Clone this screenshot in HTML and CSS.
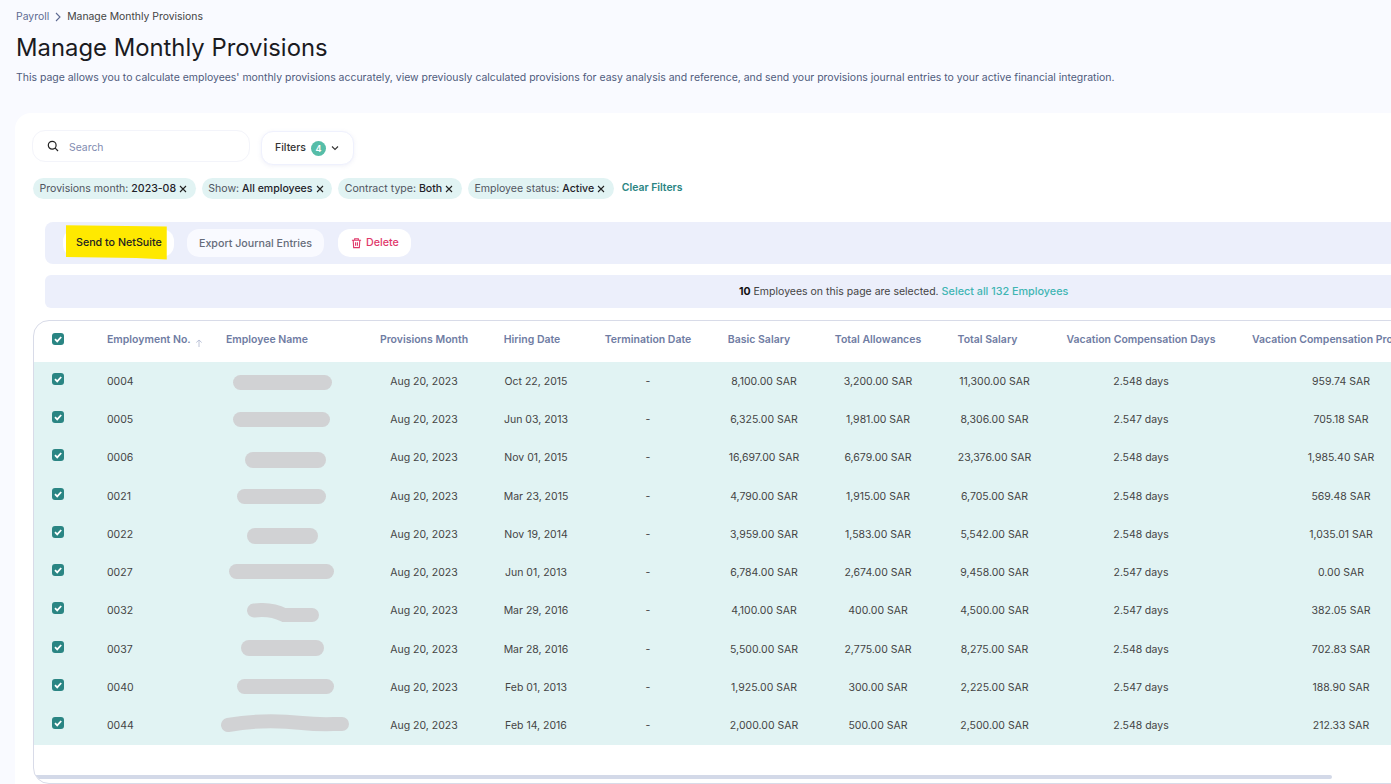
FILE: index.html
```html
<!DOCTYPE html>
<html lang="en">
<head>
<meta charset="utf-8">
<title>Manage Monthly Provisions</title>
<link rel="stylesheet" href="styles.css">
</head>
<body>
<main class="page">
  <nav class="crumbs">
    <a class="crumb-link">Payroll</a>
    <svg class="crumb-sep" viewBox="0 0 8 10" width="8" height="10"><path d="M2 1l4 4-4 4" fill="none" stroke="#5e6a92" stroke-width="1.1"/></svg>
    <span class="crumb-current">Manage Monthly Provisions</span>
  </nav>
  <h1 class="title">Manage Monthly Provisions</h1>
  <p class="intro">This page allows you to calculate employees' monthly provisions accurately, view previously calculated provisions for easy analysis and reference, and send your provisions journal entries to your active financial integration.</p>

  <section class="card">
    <div class="toolbar">
      <label class="search">
        <svg viewBox="0 0 12 12" width="12" height="12"><circle cx="5.2" cy="5.2" r="3.9" fill="none" stroke="#222" stroke-width="1.2"/><path d="M8.2 8.2l2.8 2.8" stroke="#222" stroke-width="1.2"/></svg>
        <span class="search-text">Search</span>
      </label>
      <button class="filters"><span class="filters-label">Filters</span> <span class="count">4</span>
        <svg viewBox="0 0 8 6" width="8" height="6"><path d="M1 1.5l3 3 3-3" fill="none" stroke="#333" stroke-width="1.1"/></svg>
      </button>
    </div>

    <div class="chips">
      <span class="chip">Provisions month: <b>2023-08</b><svg class="x" viewBox="0 0 8 8" width="8" height="8"><path d="M1 1l6 6M7 1l-6 6" stroke="#222" stroke-width="1.1"/></svg></span>
      <span class="chip">Show: <b>All employees</b><svg class="x" viewBox="0 0 8 8" width="8" height="8"><path d="M1 1l6 6M7 1l-6 6" stroke="#222" stroke-width="1.1"/></svg></span>
      <span class="chip">Contract type: <b>Both</b><svg class="x" viewBox="0 0 8 8" width="8" height="8"><path d="M1 1l6 6M7 1l-6 6" stroke="#222" stroke-width="1.1"/></svg></span>
      <span class="chip">Employee status: <b>Active</b><svg class="x" viewBox="0 0 8 8" width="8" height="8"><path d="M1 1l6 6M7 1l-6 6" stroke="#222" stroke-width="1.1"/></svg></span>
      <a class="clear">Clear Filters</a>
    </div>

    <div class="actions">
      <button class="btn btn-send"><span class="mark">Send to NetSuite</span></button>
      <button class="btn btn-export">Export Journal Entries</button>
      <button class="btn btn-delete">
        <svg viewBox="0 0 12 12" width="11" height="12"><path d="M1 3h10M4 3V1.4h4V3M2.4 3l.5 8h6.200l.5-8M5 5.200v3.800M7 5.200v3.800" fill="none" stroke="#e0386a" stroke-width="1.2"/></svg>
        Delete
      </button>
    </div>

    <div class="selection"><span class="selection-in"><b>10</b> Employees on this page are selected. <a class="select-all">Select all 132 Employees</a></span></div>

    <div class="table-box">
      <table class="grid">
        <colgroup>
          <col class="c-check"><col class="c-no"><col class="c-name"><col class="c-month"><col class="c-hire"><col class="c-term"><col class="c-basic"><col class="c-allow"><col class="c-total"><col class="c-days"><col class="c-prov">
        </colgroup>
        <thead>
          <tr>
            <th><span class="check"><svg viewBox="0 0 12 12"><path d="M3 6.200l2.200 2.200L9.200 4" fill="none" stroke="#fff" stroke-width="1.800"/></svg></span></th>
            <th class="left">Employment No.<svg class="sort" viewBox="0 0 8 8" width="8" height="8"><path d="M4 8V1M1.300 3.500L4 1l2.700 2.500" fill="none" stroke="#b6bdd4" stroke-width=".9"/></svg></th>
            <th class="left name-head">Employee Name</th>
            <th>Provisions Month</th>
            <th class="head-hire">Hiring Date</th>
            <th>Termination Date</th>
            <th class="head-basic">Basic Salary</th>
            <th>Total Allowances</th>
            <th class="head-total">Total Salary</th>
            <th>Vacation Compensation Days</th>
            <th class="left head-prov">Vacation Compensation Provisions</th>
          </tr>
        </thead>
        <tbody>
          <tr><td><span class="check"><svg viewBox="0 0 12 12"><path d="M3 6.200l2.200 2.200L9.200 4" fill="none" stroke="#fff" stroke-width="1.800"/></svg></span></td><td class="left">0004</td><td class="left"><span class="blob b1"></span></td><td>Aug 20, 2023</td><td>Oct 22, 2015</td><td>-</td><td>8,100.00 SAR</td><td>3,200.00 SAR</td><td>11,300.00 SAR</td><td>2.548 days</td><td>959.74 SAR</td></tr>
          <tr><td><span class="check"><svg viewBox="0 0 12 12"><path d="M3 6.200l2.200 2.200L9.200 4" fill="none" stroke="#fff" stroke-width="1.800"/></svg></span></td><td class="left">0005</td><td class="left"><span class="blob b2"></span></td><td>Aug 20, 2023</td><td>Jun 03, 2013</td><td>-</td><td>6,325.00 SAR</td><td>1,981.00 SAR</td><td>8,306.00 SAR</td><td>2.547 days</td><td>705.18 SAR</td></tr>
          <tr><td><span class="check"><svg viewBox="0 0 12 12"><path d="M3 6.200l2.200 2.200L9.200 4" fill="none" stroke="#fff" stroke-width="1.800"/></svg></span></td><td class="left">0006</td><td class="left"><span class="blob b3"></span></td><td>Aug 20, 2023</td><td>Nov 01, 2015</td><td>-</td><td>16,697.00 SAR</td><td>6,679.00 SAR</td><td>23,376.00 SAR</td><td>2.548 days</td><td>1,985.40 SAR</td></tr>
          <tr><td><span class="check"><svg viewBox="0 0 12 12"><path d="M3 6.200l2.200 2.200L9.200 4" fill="none" stroke="#fff" stroke-width="1.800"/></svg></span></td><td class="left">0021</td><td class="left"><span class="blob b4"></span></td><td>Aug 20, 2023</td><td>Mar 23, 2015</td><td>-</td><td>4,790.00 SAR</td><td>1,915.00 SAR</td><td>6,705.00 SAR</td><td>2.548 days</td><td>569.48 SAR</td></tr>
          <tr><td><span class="check"><svg viewBox="0 0 12 12"><path d="M3 6.200l2.200 2.200L9.200 4" fill="none" stroke="#fff" stroke-width="1.800"/></svg></span></td><td class="left">0022</td><td class="left"><span class="blob b5"></span></td><td>Aug 20, 2023</td><td>Nov 19, 2014</td><td>-</td><td>3,959.00 SAR</td><td>1,583.00 SAR</td><td>5,542.00 SAR</td><td>2.548 days</td><td>1,035.01 SAR</td></tr>
          <tr><td><span class="check"><svg viewBox="0 0 12 12"><path d="M3 6.200l2.200 2.200L9.200 4" fill="none" stroke="#fff" stroke-width="1.800"/></svg></span></td><td class="left">0027</td><td class="left"><span class="blob b6"></span></td><td>Aug 20, 2023</td><td>Jun 01, 2013</td><td>-</td><td>6,784.00 SAR</td><td>2,674.00 SAR</td><td>9,458.00 SAR</td><td>2.547 days</td><td>0.00 SAR</td></tr>
          <tr><td><span class="check"><svg viewBox="0 0 12 12"><path d="M3 6.200l2.200 2.200L9.200 4" fill="none" stroke="#fff" stroke-width="1.800"/></svg></span></td><td class="left">0032</td><td class="left"><svg class="blob-svg s7" viewBox="0 0 74 20" width="74" height="20"><path d="M8 7.500C20 6 30 8 38 12H66" fill="none" stroke="#d1d2d4" stroke-width="14" stroke-linecap="round"/></svg></td><td>Aug 20, 2023</td><td>Mar 29, 2016</td><td>-</td><td>4,100.00 SAR</td><td>400.00 SAR</td><td>4,500.00 SAR</td><td>2.547 days</td><td>382.05 SAR</td></tr>
          <tr><td><span class="check"><svg viewBox="0 0 12 12"><path d="M3 6.200l2.200 2.200L9.200 4" fill="none" stroke="#fff" stroke-width="1.800"/></svg></span></td><td class="left">0037</td><td class="left"><span class="blob b8"></span></td><td>Aug 20, 2023</td><td>Mar 28, 2016</td><td>-</td><td>5,500.00 SAR</td><td>2,775.00 SAR</td><td>8,275.00 SAR</td><td>2.548 days</td><td>702.83 SAR</td></tr>
          <tr><td><span class="check"><svg viewBox="0 0 12 12"><path d="M3 6.200l2.200 2.200L9.200 4" fill="none" stroke="#fff" stroke-width="1.800"/></svg></span></td><td class="left">0040</td><td class="left"><span class="blob b9"></span></td><td>Aug 20, 2023</td><td>Feb 01, 2013</td><td>-</td><td>1,925.00 SAR</td><td>300.00 SAR</td><td>2,225.00 SAR</td><td>2.547 days</td><td>188.90 SAR</td></tr>
          <tr><td><span class="check"><svg viewBox="0 0 12 12"><path d="M3 6.200l2.200 2.200L9.200 4" fill="none" stroke="#fff" stroke-width="1.800"/></svg></span></td><td class="left">0044</td><td class="left"><svg class="blob-svg s10" viewBox="0 0 130 20" width="130" height="20"><path d="M8 11C30 7 55 6 82 9 100 11 110 10 122 10" fill="none" stroke="#d1d2d4" stroke-width="14" stroke-linecap="round"/></svg></td><td>Aug 20, 2023</td><td>Feb 14, 2016</td><td>-</td><td>2,000.00 SAR</td><td>500.00 SAR</td><td>2,500.00 SAR</td><td>2.548 days</td><td>212.33 SAR</td></tr>
        </tbody>
      </table>
      <div class="thumb"></div>
    </div>
  </section>
</main>
</body>
</html>
```
FILE: styles.css
```css
* { box-sizing: border-box; }
html, body { margin: 0; height: 100%; }
body {
  background: #f9faff;
  font-family: Inter, "Liberation Sans", sans-serif;
  font-size: 10.5px;
  color: #444;
  overflow: hidden;
}
.page { padding: 10px 0 0 15px; width: 1391px; height: 784px; overflow: hidden; }
.crumbs { display: flex; align-items: center; gap: 5px; height: 13px; margin-left: 1px; font-size: 10.4px; }
.crumb-link { color: #5e6a92; }
.crumb-current { color: #444; }
.title { margin: 10px 0 0 1px; font-size: 23.850px; font-weight: 400; line-height: 29px; color: #1b1b1f; }
.intro { margin: 9px 0 0 1px; font-size: 10.460px; line-height: 14px; color: #4f5b7c; white-space: nowrap; }

.card {
  margin-top: 28px;
  width: 1500px;
  height: 700px;
  padding: 17px 0 0 17px;
  background: #fff;
  border-radius: 16px 0 0 0;
}
.toolbar { display: flex; align-items: flex-start; gap: 11px; }
.search {
  display: flex; align-items: center; gap: 10px;
  width: 218px; height: 32px; padding-left: 14px;
  border: 1px solid #f3f4fa; border-radius: 13px; background: #fff;
}
.search-text { color: #7f8bb0; font-size: 10.4px; padding-top: 3px; }
.filters {
  display: flex; align-items: center; gap: 4px;
  width: 93px; height: 34px; margin-top: 1px; padding: 0 0 0 13px;
  font: 500 10.5px Inter, sans-serif; color: #333;
  background: #fff; border: 1px solid #eff1fd; border-radius: 12px;
  box-shadow: 0 1px 4px rgba(120, 130, 200, .12);
}
.filters-label { padding-bottom: 2px; }
.count {
  display: inline-flex; align-items: center; justify-content: center;
  width: 15px; height: 15px; margin: 0 1px 0 1px;
  border-radius: 50%; background: #56bda8; color: #fff; font-size: 9px; font-weight: 600;
}
.chips { display: flex; align-items: center; gap: 6px; margin: 13px 0 0 1px; height: 21px; }
.chip {
  display: inline-flex; align-items: center; white-space: pre;
  height: 21px; padding: 0 8.700px 0 6.500px;
  background: #e1f3f3; border-radius: 11px; font-size: 10.550px; color: #50555f;
}
.chip b { font-weight: 500; color: #1f2229; }
.x { margin-left: 3px; }
.clear { margin: -2px 0 0 2px; font-size: 10.4px; font-weight: 600; color: #2a8583; }

.actions {
  display: flex; align-items: center; gap: 13px;
  margin: 23px 0 0 13px; height: 42px; padding-left: 18px;
  background: #eceffb; border-radius: 8px 0 0 8px;
}
.btn {
  display: inline-flex; align-items: center; justify-content: center; gap: 4px;
  height: 28px; border: 0; border-radius: 12px;
  font: 500 10.700px Inter, sans-serif; background: #fff;
}
.btn-send { width: 111px; justify-content: flex-start; padding: 0 0 0 3px; background: #fff; }
.mark {
  display: block; margin: -5px 0 -3px; padding: 10px 5px 10px 10px;
  background: #ffe900; color: #222; line-height: 15px;
  clip-path: polygon(0 2%, 100% 6%, 100% 100%, 70% 96%, 0 93%);
}
.btn-export { width: 137px; padding-bottom: 1px; background: #f9faff; color: #666c7a; }
.btn-delete { width: 73px; margin-left: 1px; padding: 0 0 1px 1px; color: #e0386a; }

.selection {
  margin: 11px 0 0 13px; height: 33px; padding-left: 694px;
  display: flex; align-items: center;
  background: #eceffb; border-radius: 6px 0 0 6px; font-size: 10.500px; color: #444;
}
.selection-in { white-space: pre; }
.selection b { font-weight: 700; color: #111; }
.select-all { color: #3fb5b3; font-weight: 500; font-size: 10.800px; }

.table-box {
  margin: 12px 0 0 1px; height: 464px;
  border: 1px solid #d8dbe8; border-radius: 16px 0 0 16px;
  overflow: hidden;
}
.grid { table-layout: fixed; width: 1403.500px; border-collapse: collapse; }
.c-check { width: 73px; }
.c-no { width: 107px; }
.c-name { width: 134.500px; }
.c-month { width: 151px; }
.c-hire { width: 73px; }
.c-term { width: 151px; }
.c-basic { width: 81px; }
.c-allow { width: 147px; }
.c-total { width: 86px; }
.c-days { width: 207px; }
.c-prov { width: 193px; }
th, td { padding: 0; text-align: center; white-space: nowrap; }
.left { text-align: left; }
thead tr { height: 41px; }
th { font-size: 10.500px; font-weight: 600; color: #6f7ca3; padding-bottom: 5px; }
.name-head { padding-left: 12px; }
.head-hire { padding-right: 8px; }
.head-basic { padding-right: 10px; }
.head-total { padding-right: 14px; }
th.head-prov { padding-left: 7.500px; }
.sort { margin: 0 0 -4px 4px; }
tbody tr { height: 38.300px; background: #e1f3f3; }
td { font-size: 10.500px; color: #444; }
.check {
  display: block; width: 12px; height: 12px; margin: 0 0 5px 18px;
  background: #2a8583; border-radius: 3px;
}
th .check { margin-bottom: 0; }
.check svg { display: block; width: 12px; height: 12px; }
.blob { display: block; height: 15px; background: #d1d2d4; border-radius: 8px; }
.b1 { width: 99px; margin: 3px 0 0 19px; }
.b2 { width: 97px; margin-left: 19px; }
.b3 { width: 81px; height: 16px; margin: 4px 0 0 31px; }
.b4 { width: 89px; margin-left: 23px; }
.b5 { width: 71px; height: 16px; margin: 4px 0 0 33px; }
.b6 { width: 105px; margin: 0 0 3px 15px; }
.b8 { width: 83px; height: 16px; margin: 0 0 2px 27px; }
.b9 { width: 97px; margin: 0 0 3px 23px; }
.blob-svg { display: block; }
.s7 { margin: 5px 0 0 32px; }
.s10 { margin: 0 0 3px 6px; }
.thumb { width: 1298px; height: 4px; margin-top: 30px; background: #d3d9e8; border-radius: 0 2px 2px 0; }
```
